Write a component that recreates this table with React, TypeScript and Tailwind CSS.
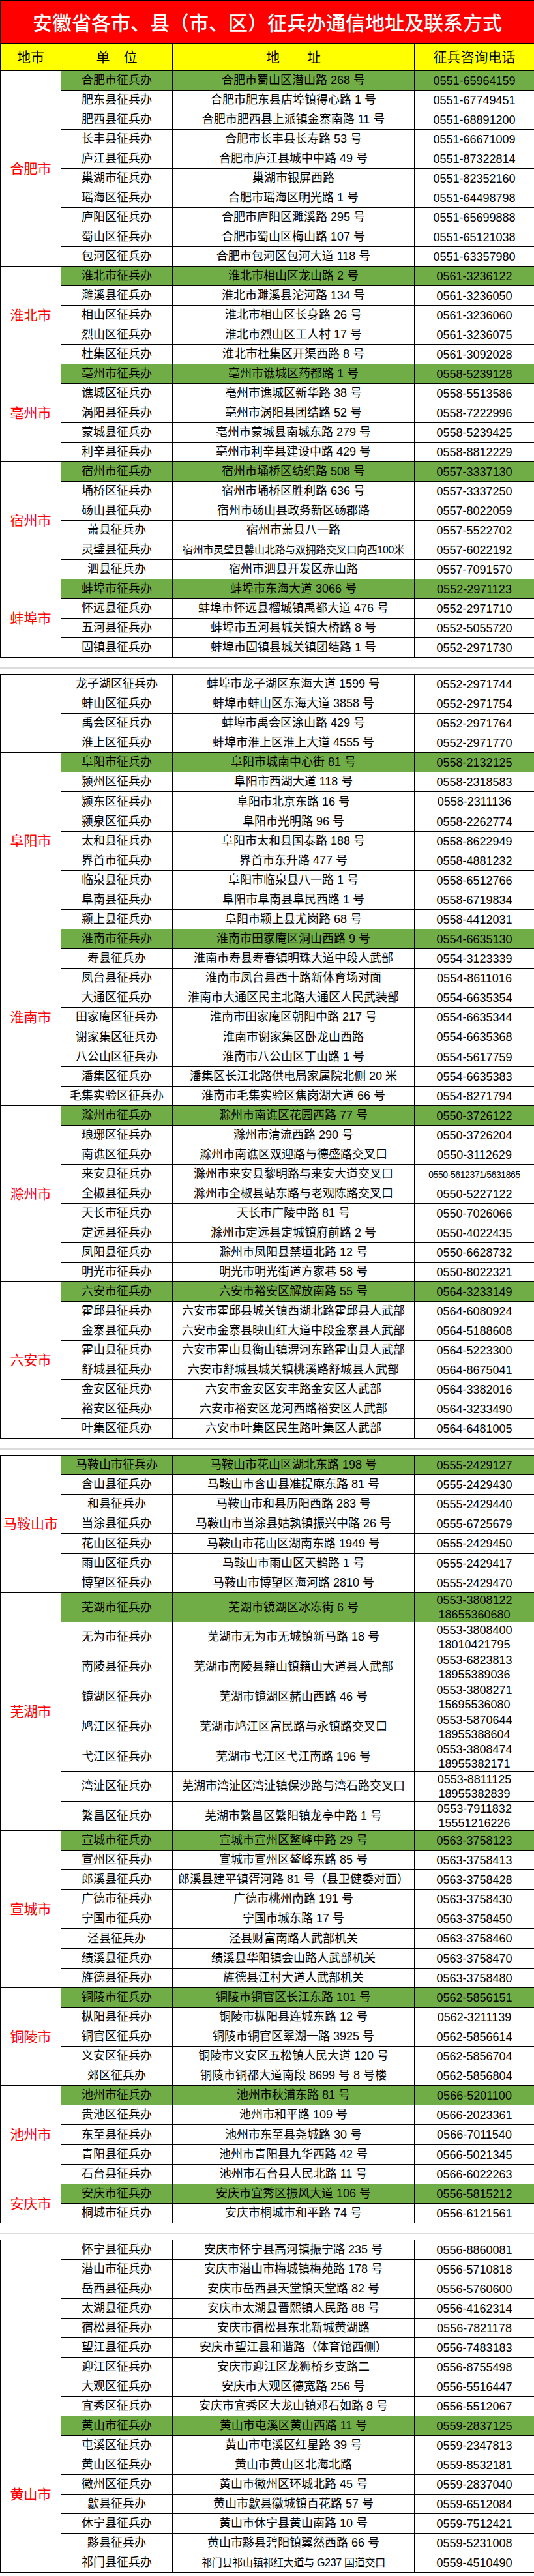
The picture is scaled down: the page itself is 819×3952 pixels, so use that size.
import React from "react"

type Row = [string, string, string, number?, string?]
type Group = { region: string; label: boolean; rows: Row[] }

const H: Record<number, string> = { 30: "h-[30px]", 31: "h-[31px]", 45: "h-[45px]", 46: "h-[46px]" }

const pages: Group[][] = [
  [
    {
      region: "合肥市",
      label: true,
      rows: [
        ["合肥市征兵办", "合肥市蜀山区潜山路 268 号", "0551-65964159"],
        ["肥东县征兵办", "合肥市肥东县店埠镇得心路 1 号", "0551-67749451"],
        ["肥西县征兵办", "合肥市肥西县上派镇金寨南路 11 号", "0551-68891200"],
        ["长丰县征兵办", "合肥市长丰县长寿路 53 号", "0551-66671009"],
        ["庐江县征兵办", "合肥市庐江县城中中路 49 号", "0551-87322814"],
        ["巢湖市征兵办", "巢湖市银屏西路", "0551-82352160"],
        ["瑶海区征兵办", "合肥市瑶海区明光路 1 号", "0551-64498798"],
        ["庐阳区征兵办", "合肥市庐阳区濉溪路 295 号", "0551-65699888"],
        ["蜀山区征兵办", "合肥市蜀山区梅山路 107 号", "0551-65121038"],
        ["包河区征兵办", "合肥市包河区包河大道 118 号", "0551-63357980"],
      ],
    },
    {
      region: "淮北市",
      label: true,
      rows: [
        ["淮北市征兵办", "淮北市相山区龙山路 2 号", "0561-3236122"],
        ["濉溪县征兵办", "淮北市濉溪县沱河路 134 号", "0561-3236050"],
        ["相山区征兵办", "淮北市相山区长身路 26 号", "0561-3236060"],
        ["烈山区征兵办", "淮北市烈山区工人村 17 号", "0561-3236075"],
        ["杜集区征兵办", "淮北市杜集区开渠西路 8 号", "0561-3092028"],
      ],
    },
    {
      region: "亳州市",
      label: true,
      rows: [
        ["亳州市征兵办", "亳州市谯城区药都路 1 号", "0558-5239128"],
        ["谯城区征兵办", "亳州市谯城区新华路 38 号", "0558-5513586"],
        ["涡阳县征兵办", "亳州市涡阳县团结路 52 号", "0558-7222996"],
        ["蒙城县征兵办", "亳州市蒙城县南城东路 279 号", "0558-5239425"],
        ["利辛县征兵办", "亳州市利辛县建设中路 429 号", "0558-8812229"],
      ],
    },
    {
      region: "宿州市",
      label: true,
      rows: [
        ["宿州市征兵办", "宿州市埇桥区纺织路 508 号", "0557-3337130"],
        ["埇桥区征兵办", "宿州市埇桥区胜利路 636 号", "0557-3337250"],
        ["砀山县征兵办", "宿州市砀山县政务新区砀郡路", "0557-8022059"],
        ["萧县征兵办", "宿州市萧县八一路", "0557-5522702"],
        ["灵璧县征兵办", "宿州市灵璧县馨山北路与双拥路交叉口向西100米", "0557-6022192", 30, "a"],
        ["泗县征兵办", "宿州市泗县开发区赤山路", "0557-7091570"],
      ],
    },
    {
      region: "蚌埠市",
      label: true,
      rows: [
        ["蚌埠市征兵办", "蚌埠市东海大道 3066 号", "0552-2971123"],
        ["怀远县征兵办", "蚌埠市怀远县榴城镇禹都大道 476 号", "0552-2971710"],
        ["五河县征兵办", "蚌埠市五河县城关镇大桥路 8 号", "0552-5055720"],
        ["固镇县征兵办", "蚌埠市固镇县城关镇团结路 1 号", "0552-2971730"],
      ],
    },
  ],
  [
    {
      region: "蚌埠市",
      label: false,
      rows: [
        ["龙子湖区征兵办", "蚌埠市龙子湖区东海大道 1599 号", "0552-2971744"],
        ["蚌山区征兵办", "蚌埠市蚌山区东海大道 3858 号", "0552-2971754"],
        ["禹会区征兵办", "蚌埠市禹会区涂山路 429 号", "0552-2971764"],
        ["淮上区征兵办", "蚌埠市淮上区淮上大道 4555 号", "0552-2971770"],
      ],
    },
    {
      region: "阜阳市",
      label: true,
      rows: [
        ["阜阳市征兵办", "阜阳市城南中心街 81 号", "0558-2132125"],
        ["颍州区征兵办", "阜阳市西湖大道 118 号", "0558-2318583"],
        ["颍东区征兵办", "阜阳市北京东路 16 号", "0558-2311136", 31],
        ["颍泉区征兵办", "阜阳市光明路 96 号", "0558-2262774"],
        ["太和县征兵办", "阜阳市太和县国泰路 188 号", "0558-8622949"],
        ["界首市征兵办", "界首市东升路 477 号", "0558-4881232"],
        ["临泉县征兵办", "阜阳市临泉县八一路 1 号", "0558-6512766"],
        ["阜南县征兵办", "阜阳市阜南县阜民西路 1 号", "0558-6719834"],
        ["颍上县征兵办", "阜阳市颍上县尤岗路 68 号", "0558-4412031"],
      ],
    },
    {
      region: "淮南市",
      label: true,
      rows: [
        ["淮南市征兵办", "淮南市田家庵区洞山西路 9 号", "0554-6635130"],
        ["寿县征兵办", "淮南市寿县寿春镇明珠大道中段人武部", "0554-3123339"],
        ["凤台县征兵办", "淮南市凤台县西十路新体育场对面", "0554-8611016"],
        ["大通区征兵办", "淮南市大通区民主北路大通区人民武装部", "0554-6635354"],
        ["田家庵区征兵办", "淮南市田家庵区朝阳中路 217 号", "0554-6635344"],
        ["谢家集区征兵办", "淮南市谢家集区卧龙山西路", "0554-6635368", 31],
        ["八公山区征兵办", "淮南市八公山区丁山路 1 号", "0554-5617759"],
        ["潘集区征兵办", "潘集区长江北路供电局家属院北侧 20 米", "0554-6635383"],
        ["毛集实验区征兵办", "淮南市毛集实验区焦岗湖大道 66 号", "0554-8271794"],
      ],
    },
    {
      region: "滁州市",
      label: true,
      rows: [
        ["滁州市征兵办", "滁州市南谯区花园西路 77 号", "0550-3726122"],
        ["琅琊区征兵办", "滁州市清流西路 290 号", "0550-3726204"],
        ["南谯区征兵办", "滁州市南谯区双迎路与德盛路交叉口", "0550-3112629"],
        ["来安县征兵办", "滁州市来安县黎明路与来安大道交叉口", "0550-5612371/5631865", 30, "p"],
        ["全椒县征兵办", "滁州市全椒县站东路与老观陈路交叉口", "0550-5227122"],
        ["天长市征兵办", "天长市广陵中路 81 号", "0550-7026066"],
        ["定远县征兵办", "滁州市定远县定城镇府前路 2 号", "0550-4022435"],
        ["凤阳县征兵办", "滁州市凤阳县禁垣北路 12 号", "0550-6628732"],
        ["明光市征兵办", "明光市明光街道方家巷 58 号", "0550-8022321"],
      ],
    },
    {
      region: "六安市",
      label: true,
      rows: [
        ["六安市征兵办", "六安市裕安区解放南路 55 号", "0564-3233149"],
        ["霍邱县征兵办", "六安市霍邱县城关镇西湖北路霍邱县人武部", "0564-6080924"],
        ["金寨县征兵办", "六安市金寨县映山红大道中段金寨县人武部", "0564-5188608"],
        ["霍山县征兵办", "六安市霍山县衡山镇淠河东路霍山县人武部", "0564-5223300"],
        ["舒城县征兵办", "六安市舒城县城关镇桃溪路舒城县人武部", "0564-8675041"],
        ["金安区征兵办", "六安市金安区安丰路金安区人武部", "0564-3382016"],
        ["裕安区征兵办", "六安市裕安区龙河西路裕安区人武部", "0564-3233490"],
        ["叶集区征兵办", "六安市叶集区民生路叶集区人武部", "0564-6481005"],
      ],
    },
  ],
  [
    {
      region: "马鞍山市",
      label: true,
      rows: [
        ["马鞍山市征兵办", "马鞍山市花山区湖北东路 198 号", "0555-2429127"],
        ["含山县征兵办", "马鞍山市含山县准提庵东路 81 号", "0555-2429430"],
        ["和县征兵办", "马鞍山市和县历阳西路 283 号", "0555-2429440"],
        ["当涂县征兵办", "马鞍山市当涂县姑孰镇振兴中路 26 号", "0555-6725679"],
        ["花山区征兵办", "马鞍山市花山区湖南东路 1949 号", "0555-2429450", 31],
        ["雨山区征兵办", "马鞍山市雨山区天鹊路 1 号", "0555-2429417"],
        ["博望区征兵办", "马鞍山市博望区海河路 2810 号", "0555-2429470"],
      ],
    },
    {
      region: "芜湖市",
      label: true,
      rows: [
        ["芜湖市征兵办", "芜湖市镜湖区冰冻街 6 号", "0553-3808122|18655360680", 45],
        ["无为市征兵办", "芜湖市无为市无城镇新马路 18 号", "0553-3808400|18010421795", 46],
        ["南陵县征兵办", "芜湖市南陵县籍山镇籍山大道县人武部", "0553-6823813|18955389036", 46],
        ["镜湖区征兵办", "芜湖市镜湖区赭山西路 46 号", "0553-3808271|15695536080", 46],
        ["鸠江区征兵办", "芜湖市鸠江区富民路与永镇路交叉口", "0553-5870644|18955388604", 46],
        ["弋江区征兵办", "芜湖市弋江区弋江南路 196 号", "0553-3808474|18955382171", 45],
        ["湾沚区征兵办", "芜湖市湾沚区湾沚镇保沙路与湾石路交叉口", "0553-8811125|18955382839", 46],
        ["繁昌区征兵办", "芜湖市繁昌区繁阳镇龙亭中路 1 号", "0553-7911832|15551216226", 45],
      ],
    },
    {
      region: "宣城市",
      label: true,
      rows: [
        ["宣城市征兵办", "宣城市宣州区鳌峰中路 29 号", "0563-3758123"],
        ["宣州区征兵办", "宣城市宣州区鳌峰东路 85 号", "0563-3758413"],
        ["郎溪县征兵办", "郎溪县建平镇胥河路 81 号（县卫健委对面）", "0563-3758428"],
        ["广德市征兵办", "广德市桃州南路 191 号", "0563-3758430"],
        ["宁国市征兵办", "宁国市城东路 17 号", "0563-3758450"],
        ["泾县征兵办", "泾县财富南路人武部机关", "0563-3758460", 31],
        ["绩溪县征兵办", "绩溪县华阳镇会山路人武部机关", "0563-3758470"],
        ["旌德县征兵办", "旌德县江村大道人武部机关", "0563-3758480"],
      ],
    },
    {
      region: "铜陵市",
      label: true,
      rows: [
        ["铜陵市征兵办", "铜陵市铜官区长江东路 101 号", "0562-5856151"],
        ["枞阳县征兵办", "铜陵市枞阳县连城东路 12 号", "0562-3211139"],
        ["铜官区征兵办", "铜陵市铜官区翠湖一路 3925 号", "0562-5856614"],
        ["义安区征兵办", "铜陵市义安区五松镇人民大道 120 号", "0562-5856704"],
        ["郊区征兵办", "铜陵市铜都大道南段 8699 号 8 号楼", "0562-5856804"],
      ],
    },
    {
      region: "池州市",
      label: true,
      rows: [
        ["池州市征兵办", "池州市秋浦东路 81 号", "0566-5201100"],
        ["贵池区征兵办", "池州市和平路 109 号", "0566-2023361"],
        ["东至县征兵办", "池州市东至县尧城路 30 号", "0566-7011540", 31],
        ["青阳县征兵办", "池州市青阳县九华西路 42 号", "0566-5021345"],
        ["石台县征兵办", "池州市石台县人民北路 11 号", "0566-6022263"],
      ],
    },
    {
      region: "安庆市",
      label: true,
      rows: [
        ["安庆市征兵办", "安庆市宜秀区振风大道 106 号", "0556-5815212"],
        ["桐城市征兵办", "安庆市桐城市和平路 74 号", "0556-6121561"],
      ],
    },
  ],
  [
    {
      region: "安庆市",
      label: false,
      rows: [
        ["怀宁县征兵办", "安庆市怀宁县高河镇振宁路 235 号", "0556-8860081"],
        ["潜山市征兵办", "安庆市潜山市梅城镇梅苑路 178 号", "0556-5710818"],
        ["岳西县征兵办", "安庆市岳西县天堂镇天堂路 82 号", "0556-5760600"],
        ["太湖县征兵办", "安庆市太湖县晋熙镇人民路 88 号", "0556-4162314"],
        ["宿松县征兵办", "安庆市宿松县东北新城黄湖路", "0556-7821178"],
        ["望江县征兵办", "安庆市望江县和谐路（体育馆西侧）", "0556-7483183"],
        ["迎江区征兵办", "安庆市迎江区龙狮桥乡支路二", "0556-8755498"],
        ["大观区征兵办", "安庆市大观区德宽路 256 号", "0556-5516447"],
        ["宜秀区征兵办", "安庆市宜秀区大龙山镇邓石如路 8 号", "0556-5512067"],
      ],
    },
    {
      region: "黄山市",
      label: true,
      rows: [
        ["黄山市征兵办", "黄山市屯溪区黄山西路 11 号", "0559-2837125"],
        ["屯溪区征兵办", "黄山市屯溪区红星路 39 号", "0559-2347813"],
        ["黄山区征兵办", "黄山市黄山区北海北路", "0559-8532181"],
        ["徽州区征兵办", "黄山市徽州区环城北路 45 号", "0559-2837040"],
        ["歙县征兵办", "黄山市歙县徽城镇百花路 57 号", "0559-6512084"],
        ["休宁县征兵办", "黄山市休宁县黄山南路 10 号", "0559-7512421"],
        ["黟县征兵办", "黄山市黟县碧阳镇翼然西路 66 号", "0559-5231008"],
        ["祁门县征兵办", "祁门县祁山镇祁红大道与 G237 国道交口", "0559-4510490", 30, "a"],
      ],
    },
  ],
]

function TableRow({ row, green }: { row: Row; green: boolean }) {
  const [unit, addr, phone, h = 30, small] = row
  const bg = green ? "bg-[#70ad47]" : "bg-white"
  const phones = phone.split("|")
  return (
    <div className={`grid grid-cols-[171px_371px_1fr] border-b border-black ${H[h]}`}>
      <div className={`flex items-center justify-center border-r border-black ${bg}`}>{unit}</div>
      <div
        className={`flex items-center justify-center border-r border-black whitespace-nowrap ${bg} ${
          small === "a" ? "text-[16px] tracking-[-0.3px]" : ""
        }`}
      >
        {addr}
      </div>
      <div
        className={`flex flex-col items-center justify-center leading-[22px] ${bg} ${
          small === "p" ? "text-[14px] tracking-[-0.4px]" : ""
        }`}
      >
        {phones.map((p) => (
          <span key={p}>{p}</span>
        ))}
      </div>
    </div>
  )
}

function Page({ groups }: { groups: Group[] }) {
  return (
    <div className="border-l border-t border-black">
      {groups.map((g, i) => (
        <div key={i} className="flex">
          <div className="flex w-[93px] shrink-0 items-center justify-center border-b border-r border-black text-[21px] text-[#ff0000] whitespace-nowrap">
            {g.label ? g.region : ""}
          </div>
          <div className="flex flex-1 flex-col">
            {g.rows.map((r) => (
              <TableRow key={r[0]} row={r} green={g.label && r[0] === `${g.region}征兵办`} />
            ))}
          </div>
        </div>
      ))}
    </div>
  )
}

function PageGap() {
  return (
    <div className="h-[25px] pt-[15px]">
      <div className="h-[2px] bg-[#dcdcdc]" />
    </div>
  )
}

export default function App() {
  return (
    <div className="w-[819px] overflow-hidden bg-white text-[18px] text-black font-['Liberation_Sans','Noto_Sans_CJK_SC',sans-serif]">
      <div className="border-l border-t border-black">
        <div className="flex h-[66px] items-center justify-center border-b border-black bg-[#ff0000] text-[30px] font-medium text-white font-['Noto_Sans_CJK_SC',sans-serif]">
          安徽省各市、县（市、区）征兵办通信地址及联系方式
        </div>
        <div className="grid h-[42px] grid-cols-[93px_171px_371px_1fr] border-b border-black bg-[#ffff00] text-[21px]">
          <div className="flex items-center justify-center border-r border-black">地市</div>
          <div className="flex items-center justify-center border-r border-black">单　位</div>
          <div className="flex items-center justify-center border-r border-black">地　　址</div>
          <div className="flex items-center justify-center">征兵咨询电话</div>
        </div>
      </div>
      <div className="-mt-px">
        <Page groups={pages[0]} />
      </div>
      {pages.slice(1).map((p, i) => (
        <React.Fragment key={i}>
          <PageGap />
          <Page groups={p} />
        </React.Fragment>
      ))}
      <div className="h-[6px]" />
    </div>
  )
}
